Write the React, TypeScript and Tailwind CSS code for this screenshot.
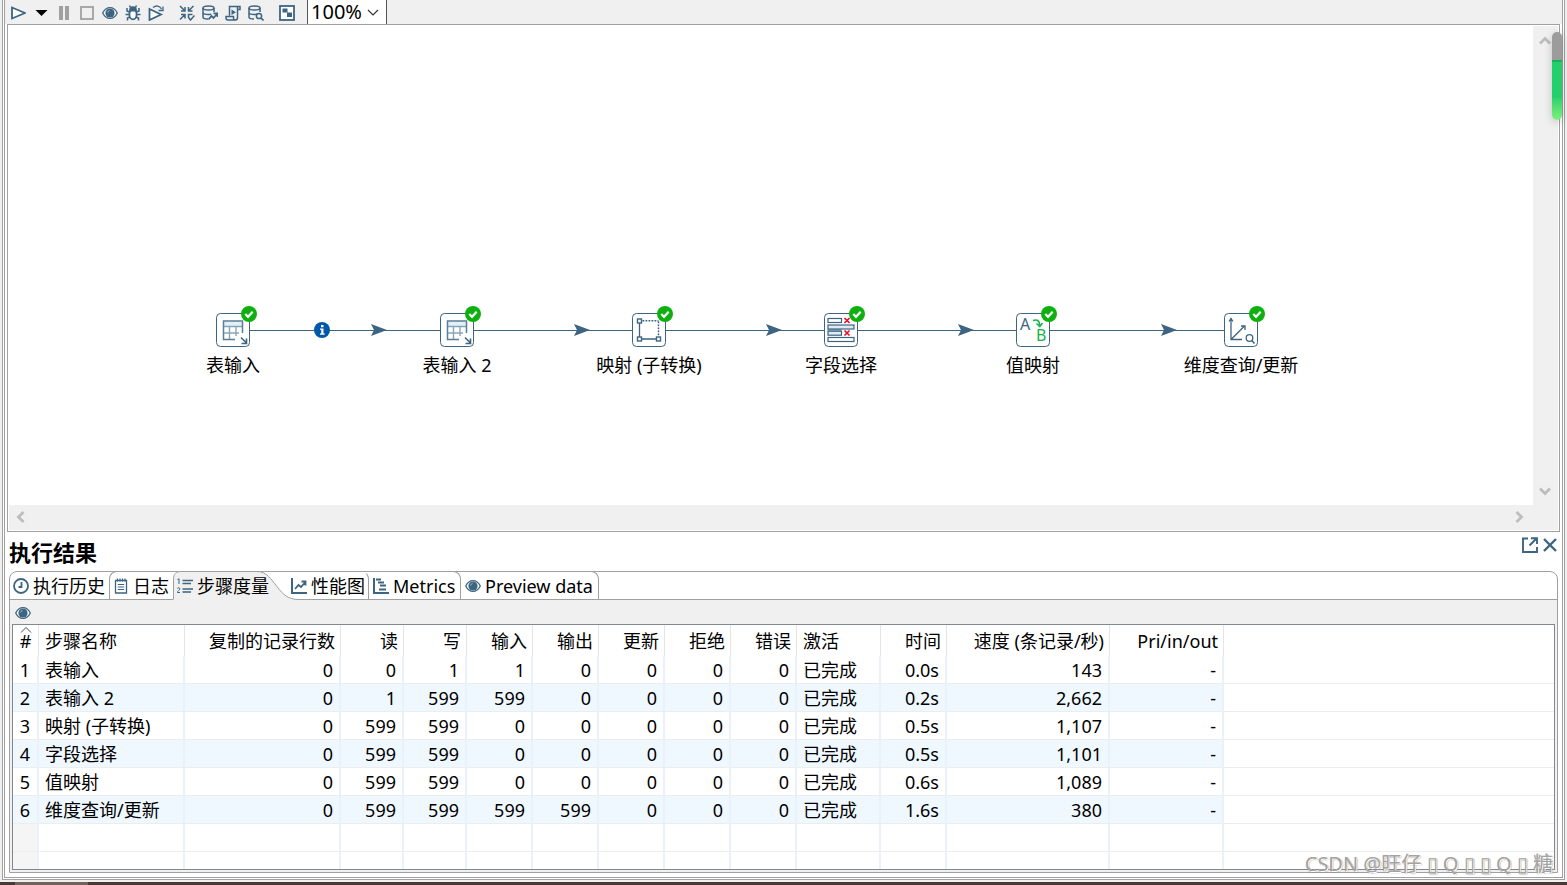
import React from 'react'

const STEEL = '#3d6480'

interface StepRow {
  name: string
  values: string[]
  status: string
  time: string
  speed: string
}

interface StepNode {
  x: number
  label: string
  icon: React.ReactNode
}

const ROWS: StepRow[] = [
  { name: '表输入', values: ['0', '0', '1', '1', '0', '0', '0', '0'], status: '已完成', time: '0.0s', speed: '143' },
  { name: '表输入 2', values: ['0', '1', '599', '599', '0', '0', '0', '0'], status: '已完成', time: '0.2s', speed: '2,662' },
  { name: '映射 (子转换)', values: ['0', '599', '599', '0', '0', '0', '0', '0'], status: '已完成', time: '0.5s', speed: '1,107' },
  { name: '字段选择', values: ['0', '599', '599', '0', '0', '0', '0', '0'], status: '已完成', time: '0.5s', speed: '1,101' },
  { name: '值映射', values: ['0', '599', '599', '0', '0', '0', '0', '0'], status: '已完成', time: '0.6s', speed: '1,089' },
  { name: '维度查询/更新', values: ['0', '599', '599', '599', '599', '0', '0', '0'], status: '已完成', time: '1.6s', speed: '380' },
]

const COUNT_HEADERS = ['复制的记录行数', '读', '写', '输入', '输出', '更新', '拒绝', '错误']

const Icon: React.FC<{ children: React.ReactNode }> = ({ children }) => (
  <svg width="16" height="16" viewBox="0 0 16 16" fill="none" stroke={STEEL} strokeWidth="1.8" className="block shrink-0">
    {children}
  </svg>
)

const EyeIcon = () => (
  <Icon>
    <path d="M0.7 8C2.5 4.4 5 2.600 8 2.600s5.500 1.800 7.300 5.400C13.500 11.600 11 13.400 8 13.400S2.500 11.600 0.700 8z" strokeWidth="1.3" fill="#fff" />
    <circle cx="8" cy="8" r="4.600" fill={STEEL} stroke="none" />
    <path d="M5.600 7.600A2.600 2.600 0 0 1 7.600 5.400" stroke="#a9bdca" strokeWidth="0.900" />
  </Icon>
)

const DbIcon: React.FC<{ children: React.ReactNode }> = ({ children }) => (
  <Icon>
    <g strokeWidth="1.500">
      <ellipse cx="6.500" cy="3" rx="5.500" ry="2" />
      <path d="M1 3v9c0 1.200 2 2 5 2M12 3v4M1 7.500c0 1.200 2.400 2 5.500 2 1 0 2-.1 2.800-.3" />
      {children}
    </g>
  </Icon>
)

const ToolButton: React.FC<{ label: string; gap?: boolean; children: React.ReactNode }> = ({ label, gap, children }) => (
  <button type="button" aria-label={label} className={gap ? 'ml-2' : ''}>
    {children}
  </button>
)

const Toolbar = () => (
  <div className="flex h-6 shrink-0 bg-[#f0f0f0] pl-[5px]">
    <div className="flex items-center gap-[7px] pt-[2px]">
      <ToolButton label="运行">
        <Icon><path d="M2 2.500L15 8 2 13.500z" fill="#fff" /></Icon>
      </ToolButton>
      <ToolButton label="运行选项">
        <Icon><path d="M2.500 5h12L8.500 11z" fill="#000" stroke="none" /></Icon>
      </ToolButton>
      <ToolButton label="暂停">
        <Icon><path d="M3 1h4v14H3zM9 1h4v14H9z" fill="#a0a0a0" stroke="none" /></Icon>
      </ToolButton>
      <ToolButton label="停止">
        <Icon><rect x="2" y="2" width="12" height="12" stroke="#a0a0a0" /></Icon>
      </ToolButton>
      <ToolButton label="预览"><EyeIcon /></ToolButton>
      <ToolButton label="调试">
        <Icon>
          <ellipse cx="8" cy="9.500" rx="3.600" ry="4.800" fill="#fff" />
          <path d="M5 5.500C5 3 6 2.200 8 2.200s3 .8 3 3.300z" fill={STEEL} />
          <path d="M5.500 2.500L4.500 .5M10.500 2.500l1-2M4.500 7L2 6V3M11.500 7L14 6V3M4.300 9.500H.5M11.700 9.500h3.800M5 12l-2.500 1v2.500M11 12l2.500 1v2.500" strokeWidth="1.500" />
        </Icon>
      </ToolButton>
      <ToolButton label="重放">
        <Icon>
          <path d="M1.500 4L13 9.500 1.500 15z" fill="#fff" />
          <path d="M5 2.500C8 .2 11.500 .5 13.500 4M15 1.500v4h-4.500" strokeWidth="1.300" />
        </Icon>
      </ToolButton>
      <ToolButton label="校验" gap>
        <Icon>
          <path d="M1 1l4.500 4.500M6 2v4H2M14.500 1L10 5.500M9.500 2v4h4M1 14.500l4.500-4.500M2 9.500h4v4M9.500 13v-3.500h4M9.500 12.500l2 2.500 4-4.500" strokeWidth="1.500" />
        </Icon>
      </ToolButton>
      <ToolButton label="影响分析">
        <DbIcon><path d="M6.500 14.500l3-3.500 2 2 3.500-4M11.500 8.300h4V12" strokeWidth="1.800" /></DbIcon>
      </ToolButton>
      <ToolButton label="生成 SQL">
        <Icon>
          <path d="M4.500 10.500V1.500h10.500v3h-2.500v8c0 1.500-.8 2.500-2 2.500H3c-1.300 0-2-.8-2-2v-1.500h7.500V13c0 1 .7 2 2 2M12.500 4.500v-3" strokeWidth="1.500" />
          <path d="M6.500 4.500l4.500 2.700L6.500 10z" fill={STEEL} stroke="none" />
        </Icon>
      </ToolButton>
      <ToolButton label="浏览数据库">
        <DbIcon><circle cx="11" cy="11" r="2.600" /><path d="M13 13l2.500 2.500" strokeWidth="1.700" /></DbIcon>
      </ToolButton>
      <ToolButton label="显示执行结果" gap>
        <Icon>
          <rect x="1" y="1" width="14" height="14" fill="#fff" />
          <path d="M3.500 3.500h5v4h-5zM8 7.500h5V12H8z" fill={STEEL} stroke="none" />
        </Icon>
      </ToolButton>
    </div>
    <div className="relative ml-3 h-full">
      <select aria-label="缩放" className="block h-full w-20 appearance-none border-x border-[#555] bg-white pl-[3px] text-[20px] leading-6 text-black outline-none" defaultValue="100%">
        <option>50%</option>
        <option>100%</option>
        <option>200%</option>
      </select>
      <svg width="12" height="8" viewBox="0 0 12 8" fill="none" stroke="#333" strokeWidth="1.200" className="pointer-events-none absolute top-[9px] right-2">
        <path d="M1 1l5 5 5-5" />
      </svg>
    </div>
  </div>
)

const TableInputIcon = () => (
  <g>
    <path d="M8 8.500h18V13H8z" fill="#e2eff8" stroke="none" />
    <path d="M7.500 13.500H26.500M7.500 20H23M13.500 13.500v13M20 13.500V23" stroke="#8aa4b7" strokeWidth="1.400" />
    <path d="M26.500 20V8H7.500v18.500H19" stroke="#5b7d96" strokeWidth="1.500" />
    <path d="M25 24.500l5.500 5.500M30.500 25.500v5h-5" strokeWidth="1.600" />
  </g>
)

const MappingIcon = () => (
  <g>
    <path d="M7.500 10v14M10 26h14" strokeWidth="1.300" />
    <path d="M10.500 7.800H26.500M26.500 8.500v15" strokeDasharray="1.800 1.200" strokeWidth="1.500" />
    <g fill="#fff" strokeWidth="1.400">
      <rect x="5.500" y="6" width="4" height="4" />
      <rect x="5.500" y="24" width="4" height="4" />
      <rect x="24.500" y="24" width="4" height="4" />
    </g>
  </g>
)

const SelectFieldsIcon = () => (
  <g strokeWidth="1.200">
    <path d="M3.500 16h14v2.500h-14z" fill="#8fa9bb" stroke="none" />
    <rect x="4" y="5.500" width="13.500" height="4" fill="#fff" />
    <rect x="4" y="12" width="26" height="4" fill="#dfeaf2" />
    <rect x="4" y="18.200" width="13.500" height="4" fill="#dfeaf2" />
    <rect x="4" y="24.500" width="26" height="4" fill="#fff" />
    <path d="M20.500 5l5 5M25.500 5l-5 5M20.500 17.500l5 5M25.500 17.500l-5 5" stroke="#e0122f" strokeWidth="1.700" />
  </g>
)

const ValueMapperIcon = () => (
  <g>
    <text x="4" y="17" fontSize="16" fill={STEEL} stroke="none">A</text>
    <text x="20" y="28" fontSize="16" fill="#16b34a" stroke="none">B</text>
    <path d="M17 7.500c4-1.500 6.500 0 6.700 4.500M20.500 10.500l3.300 3 2.700-3.500" stroke="#16b34a" strokeWidth="1.600" />
  </g>
)

const DimensionIcon = () => (
  <g strokeWidth="1.300">
    <path d="M7 6v20.500h11M5 8.500L7 5.500l2 3M7 26.500L20.500 13M17 13h4v4" />
    <circle cx="25.500" cy="25" r="3.300" />
    <path d="M27.800 27.500l2.700 3" strokeWidth="1.600" />
  </g>
)

const NODES: StepNode[] = [
  { x: 207, label: '表输入', icon: <TableInputIcon /> },
  { x: 431, label: '表输入 2', icon: <TableInputIcon /> },
  { x: 623, label: '映射 (子转换)', icon: <MappingIcon /> },
  { x: 815, label: '字段选择', icon: <SelectFieldsIcon /> },
  { x: 1007, label: '值映射', icon: <ValueMapperIcon /> },
  { x: 1215, label: '维度查询/更新', icon: <DimensionIcon /> },
]

// 每段连线箭头的起始横坐标
const ARROWS = [362, 565, 757, 949, 1152]

const Chevron: React.FC<{ d: string; label: string }> = ({ d, label }) => (
  <button type="button" aria-label={label} className="flex size-6 items-center justify-center">
    <svg width="14" height="14" viewBox="0 0 14 14" fill="none" stroke="#bdbdbd" strokeWidth="2.800">
      <path d={d} />
    </svg>
  </button>
)

const Canvas = () => (
  <div className="mx-[2px] grid min-h-[360px] flex-1 grid-cols-[1fr_25px] grid-rows-[1fr_25px] border border-[#a0a0a0] bg-white p-px">
    <div className="relative overflow-hidden">
      <svg className="absolute inset-0 h-full w-full" fill="none" stroke={STEEL}>
        {ARROWS.map((x, i) => (
          <g key={x}>
            <path d={`M${NODES[i].x + 34} 304.500H${NODES[i + 1].x}`} />
            <path d={`M${x} 298l16 6-16 6 3-6z`} fill={STEEL} stroke="none" />
          </g>
        ))}
        <circle cx="313" cy="304" r="8" fill="#0059a8" stroke="none" />
        <path d="M312 299h2.500v2.200H312zM311 302.500h3.500v5h1.200v1.300H311v-1.300h1.200v-3.700H311z" fill="#fff" stroke="none" />
      </svg>
      {NODES.map((node) => (
        <div key={node.label} className="absolute top-[287px] flex w-[34px] flex-col items-center" style={{ left: node.x }}>
          <div className="relative size-[34px] shrink-0">
            <svg width="34" height="34" viewBox="0 0 34 34" fill="none" stroke={STEEL}>
              <rect x="0.500" y="0.500" width="33" height="33" rx="4" fill="#fff" />
              {node.icon}
            </svg>
            <svg width="16" height="16" viewBox="0 0 16 16" className="absolute -top-[7px] -right-[7px]">
              <circle cx="8" cy="8" r="8" fill="#0eb010" />
              <path d="M4.300 8l2.700 2.800 4.700-5" fill="none" stroke="#fff" strokeWidth="2.200" />
            </svg>
          </div>
          <span className="mt-[6px] text-lg leading-6 whitespace-nowrap">{node.label}</span>
        </div>
      ))}
    </div>
    <div className="flex flex-col justify-between bg-[#f0f0f0] pt-[3px] pb-[2px]">
      <Chevron label="向上" d="M2 9.500l5-5 5 5" />
      <Chevron label="向下" d="M2 4.500l5 5 5-5" />
    </div>
    <div className="flex justify-between bg-[#f0f0f0] pr-[2px]">
      <Chevron label="向左" d="M9.500 2l-5 5 5 5" />
      <Chevron label="向右" d="M4.500 2l5 5-5 5" />
    </div>
    <div className="bg-[#f0f0f0]" />
  </div>
)

const Tabs = () => (
  <div role="tablist" className="-mt-px flex h-[29px] border-b border-[#a0a0a0] text-lg leading-6 whitespace-nowrap">
    <button type="button" role="tab" className="flex w-[99px] items-center gap-1 border-t border-transparent pl-[3px]">
      <Icon>
        <circle cx="8" cy="8" r="7" />
        <path d="M8.500 4v5H5.500" />
      </Icon>
      执行历史
    </button>
    <button type="button" role="tab" className="flex w-16 items-center gap-1 rounded-tl-lg border-t border-l border-[#a0a0a0] pl-[3px]">
      <Icon>
        <path d="M2.500 2.500h11v12.500h-11z" strokeWidth="1.300" />
        <path d="M4.500 0.500v3M7 .5v3M9.500 .5v3M12 .5v3M4.800 6.500h6.400M4.800 9h6.400M4.800 11.500h6.400" strokeWidth="1.200" />
      </Icon>
      日志
    </button>
    <button type="button" role="tab" aria-selected="true" className="relative flex w-[114px] items-center border-t border-transparent pl-1">
      <svg width="126" height="29" viewBox="0 0 126 29" fill="none" className="absolute -top-px left-0">
        <path d="M.5 29V8C.5 3 3 .5 8 .5h76c10 0 14 8 20 15 6 8 11 13 22 13V29z" fill="#f0f0f0" />
        <path d="M.5 28V8C.5 3 3 .5 8 .5h76c10 0 14 8 20 15 6 8 11 13 22 13" stroke="#a0a0a0" />
      </svg>
      <span className="relative flex items-center gap-1">
        <Icon>
          <path d="M5.500 2.500H16M5.500 5.500h8.500M5.500 11H16M5.500 14h8.500" strokeWidth="1.300" />
          <path d="M.5 1.500L2 .8V6M.3 10.500c.5-1 2.700-1 2.500.5-.1 1-2.300 2-2.500 3.500H3" strokeWidth="1" />
        </Icon>
        步骤度量
      </span>
    </button>
    <button type="button" role="tab" className="relative flex w-[82px] items-center gap-1 rounded-tr-lg border-t border-r border-[#a0a0a0] pl-1 [border-top-color:transparent]">
      <Icon>
        <path d="M1 0v15h15" strokeWidth="2" />
        <path d="M4 11l3.500-4 2.500 2 4-4.500M10.500 3.500h4v4" />
      </Icon>
      性能图
    </button>
    <button type="button" role="tab" className="flex w-[92px] items-center gap-1 rounded-tr-lg border-t border-r border-[#a0a0a0] pl-1">
      <Icon>
        <path d="M1 0v15h15M3 1.500h5M5 4.500h6M7 7.500h6M6 11.500h7" strokeWidth="2" />
      </Icon>
      Metrics
    </button>
    <button type="button" role="tab" className="flex w-[138px] items-center gap-1 rounded-tr-lg border-t border-r border-[#a0a0a0] pl-1">
      <EyeIcon />
      Preview data
    </button>
  </div>
)

const HEAD = 'border-r border-[#e5e5e5] p-0 font-normal'
const CELL = 'border-r-2 border-b border-r-[#ebf1fb] border-b-[#ededed] p-0'

const MetricsTable = () => (
  <table className="w-full table-fixed border-separate border-spacing-0 text-lg leading-6 whitespace-nowrap">
    <colgroup>
      <col className="w-[26px]" />
      <col className="w-[146px]" />
      <col className="w-[156px]" />
      <col className="w-[63px]" />
      <col className="w-[63px]" />
      <col className="w-[66px]" />
      <col className="w-[66px]" />
      <col className="w-[66px]" />
      <col className="w-[66px]" />
      <col className="w-[66px]" />
      <col className="w-[84px]" />
      <col className="w-[66px]" />
      <col className="w-[163px]" />
      <col className="w-[114px]" />
      <col />
    </colgroup>
    <thead>
      <tr className="h-[31px]">
        <th className={`${HEAD} relative text-center`}>
          <svg width="12" height="6" viewBox="0 0 12 6" fill="none" stroke="#444" className="absolute top-[2px] left-[7px]">
            <path d="M1 5.500l5-5 5 5" />
          </svg>
          #
        </th>
        <th className={`${HEAD} pl-[6px] text-left`}>步骤名称</th>
        {COUNT_HEADERS.map((h) => (
          <th key={h} className={`${HEAD} pr-[5px] text-right`}>{h}</th>
        ))}
        <th className={`${HEAD} pl-[6px] text-left`}>激活</th>
        <th className={`${HEAD} pr-[5px] text-right`}>时间</th>
        <th className={`${HEAD} pr-[5px] text-right`}>速度 (条记录/秒)</th>
        <th className={`${HEAD} pr-[5px] text-right`}>Pri/in/out</th>
        <th className="p-0" />
      </tr>
    </thead>
    <tbody>
      {ROWS.map((row, i) => {
        const cell = i % 2 ? `${CELL} bg-[#f0f8ff]` : CELL
        return (
          <tr key={row.name} className="h-7">
            <td className={`${cell} text-center`}>{i + 1}</td>
            <td className={`${cell} pl-[6px]`}>{row.name}</td>
            {row.values.map((v, n) => (
              <td key={n} className={`${cell} pr-[6px] text-right`}>{v}</td>
            ))}
            <td className={`${cell} pl-[6px]`}>{row.status}</td>
            <td className={`${cell} pr-[6px] text-right`}>{row.time}</td>
            <td className={`${cell} pr-[6px] text-right`}>{row.speed}</td>
            <td className={`${cell} pr-[6px] text-right`}>-</td>
            <td className="border-b border-[#ededed] p-0" />
          </tr>
        )
      })}
      <tr className="h-7">
        {Array.from({ length: 14 }, (_, n) => (
          <td key={n} className={n === 0 ? `${CELL} bg-[#f5f5f5]` : CELL} />
        ))}
        <td className="border-b border-[#ededed] p-0" />
      </tr>
      <tr className="h-[17px]">
        {Array.from({ length: 14 }, (_, n) => (
          <td key={n} className={n === 0 ? 'border-r-2 border-[#ebf1fb] bg-[#f5f5f5] p-0' : 'border-r-2 border-[#ebf1fb] p-0'} />
        ))}
        <td className="p-0" />
      </tr>
    </tbody>
  </table>
)

const Results = () => (
  <section className="shrink-0 bg-white pr-1 pb-1 pl-1">
    <div className="flex h-[39px] items-center justify-between">
      <h2 className="text-[22px] leading-7 font-bold">执行结果</h2>
      <div className="flex gap-1 pb-[14px]">
        <button type="button" aria-label="最大化">
          <Icon>
            <path d="M6 1.500H1v13.500h14v-5M9 1.200h6v5.800M14.500 1.500L7.500 8.500" strokeWidth="1.900" />
          </Icon>
        </button>
        <button type="button" aria-label="关闭">
          <Icon><path d="M2 2l12 12M14 2L2 14" strokeWidth="2.400" /></Icon>
        </button>
      </div>
    </div>
    <div className="rounded-t-lg border border-[#a0a0a0]">
      <Tabs />
      <div className="bg-[#f0f0f0] px-[2px] pb-[2px]">
        <div className="flex h-6 items-center pt-[2px] pl-[3px]">
          <button type="button" aria-label="显示选定的步骤"><EyeIcon /></button>
        </div>
        <div className="border border-[#828790] bg-white">
          <MetricsTable />
        </div>
      </div>
    </div>
  </section>
)

export default function App() {
  return (
    <div className="relative flex min-h-screen flex-col bg-[#f0f0f0] font-['Noto_Sans','Noto_Sans_CJK_SC',sans-serif] text-black">
      <div className="mx-[2px] mb-[2px] flex flex-1 flex-col border border-t-0 border-[#a0a0a0] bg-white px-px pb-px">
        <div className="flex flex-1 flex-col border border-t-0 border-[#a0a0a0]">
          <Toolbar />
          <Canvas />
          <Results />
        </div>
      </div>
      <div className="h-[3px] shrink-0 bg-[#4a3832] pl-[15px]">
        <div className="h-full w-[73px] bg-[#75625a]" />
      </div>

      {/* 悬浮的进度指示条 */}
      <div className="absolute top-8 right-[5px] flex h-[88px] w-[10px] flex-col overflow-hidden rounded-full shadow-[0_2px_8px_rgba(0,0,0,0.2)]">
        <div className="h-7 bg-[#9c9c9c]" />
        <div className="flex-1 border-t-2 border-[#1fae5c] bg-linear-to-b from-[#23cf6c] from-60% to-[#7cf07c]" />
      </div>

      <div className="absolute right-[14px] bottom-[7px] text-[20px] leading-7 whitespace-nowrap text-[#a3a3a3] [text-shadow:1px_1px_0_#ffffff,1px_1px_1px_#555555]">
        CSDN @旺仔 ▯ Q ▯ ▯ Q ▯ 糖
      </div>
    </div>
  )
}
